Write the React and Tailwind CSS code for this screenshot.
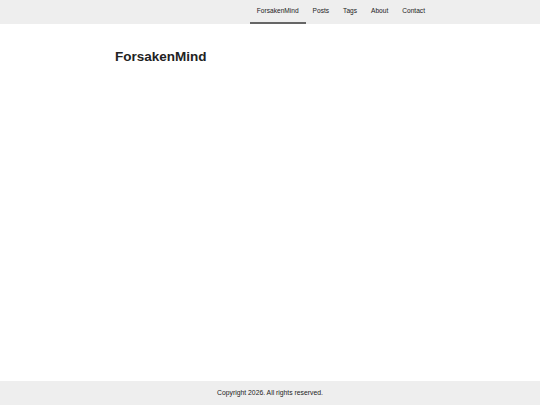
export default function App() {
  const links = ["ForsakenMind", "Posts", "Tags", "About", "Contact"];

  return (
    <div
      className="min-h-screen flex flex-col bg-white text-[#222]"
      style={{ fontFamily: '"Liberation Sans", Arial, sans-serif' }}
    >
      {/* Top nav */}
      <header className="bg-[#eeeeee] h-[24px]">
        <nav className="w-[324px] mx-auto h-full flex justify-end">
          {links.map((l, i) => (
            <a
              key={l}
              className={
                "h-full flex items-center px-[7px] text-[6.6px] leading-none border-b-2 " +
                (i === 0 ? "border-[#666666]" : "border-transparent")
              }
            >
              {l}
            </a>
          ))}
        </nav>
      </header>

      <main className="flex-1">
        <div className="w-[324px] mx-auto px-[7px] pt-[26px]">
          <h1 className="text-[13.5px] font-bold leading-none">ForsakenMind</h1>
        </div>
      </main>

      <footer className="bg-[#eeeeee] h-[24px] flex items-center justify-center">
        <p className="text-[6.8px] leading-none">Copyright 2026. All rights reserved.</p>
      </footer>
    </div>
  );
}
